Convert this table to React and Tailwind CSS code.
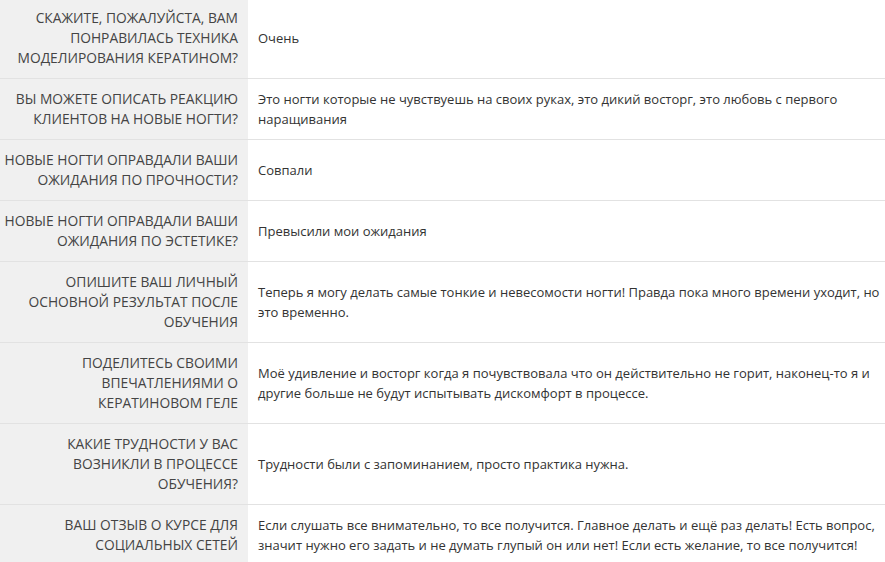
import React from "react";

const rows = [
  {
    q: "Скажите, пожалуйста, вам понравилась техника моделирования кератином?",
    a: "Очень",
  },
  {
    q: "Вы можете описать реакцию клиентов на новые ногти?",
    a: "Это ногти которые не чувствуешь на своих руках, это дикий восторг, это любовь с первого наращивания",
  },
  {
    q: "Новые ногти оправдали ваши ожидания по прочности?",
    a: "Совпали",
  },
  {
    q: "Новые ногти оправдали ваши ожидания по эстетике?",
    a: "Превысили мои ожидания",
  },
  {
    q: "Опишите ваш личный основной результат после обучения",
    a: "Теперь я могу делать самые тонкие и невесомости ногти! Правда пока много времени уходит, но это временно.",
  },
  {
    q: "Поделитесь своими впечатлениями о кератиновом геле",
    a: "Моё удивление и восторг когда я почувствовала что он действительно не горит, наконец-то я и другие больше не будут испытывать дискомфорт в процессе.",
  },
  {
    q: "Какие трудности у вас возникли в процессе обучения?",
    a: "Трудности были с запоминанием, просто практика нужна.",
  },
  {
    q: "Ваш отзыв о курсе для социальных сетей",
    a: "Если слушать все внимательно, то все получится. Главное делать и ещё раз делать! Есть вопрос, значит нужно его задать и не думать глупый он или нет! Если есть желание, то все получится!",
  },
];

export default function App() {
  return (
    <div className="w-[885px] h-[562px] overflow-hidden bg-white font-['Open_Sans',sans-serif]">
      <div className="-mt-[2px]">
        {rows.map((r, i) => (
          <div key={i} className="flex border-b border-[#e2e2e2]">
            <div className="w-[248px] shrink-0 bg-[#f0f0f0] py-[10px] pl-0 pr-[10px] text-right uppercase text-[13.8px] leading-[20px] text-[#444]">
              {r.q}
            </div>
            <div className="flex-1 flex items-center py-[10px] pl-[10px] pr-0 text-[13px] leading-[20px] text-[#333]">
              {r.a}
            </div>
          </div>
        ))}
      </div>
    </div>
  );
}
